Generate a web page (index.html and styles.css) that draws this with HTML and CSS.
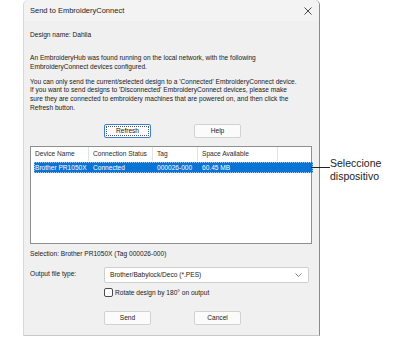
FILE: index.html
```html
<!DOCTYPE html>
<html lang="en">
  <head>
    <meta charset="UTF-8" />
    <title>Send to EmbroideryConnect</title>
    <link rel="stylesheet" href="styles.css">
  </head>
  <body>
    <div class="page">
      <div class="dialog">
        <div class="title-bar">
          <span class="title">Send to EmbroideryConnect</span>
          <svg class="close" width="8" height="8" viewBox="0 0 8 8">
            <path d="M0.5 0.5 L7.5 7.5 M7.5 0.5 L0.5 7.5" stroke="#333" stroke-width="0.9" fill="none" />
          </svg>
        </div>

        <div class="dialog-body">
          <div class="design-name">Design name: Dahlia</div>

          <p class="info">An EmbroideryHub was found running on the local network, with the following<br>EmbroideryConnect devices configured.</p>

          <p class="info">You can only send the current/selected design to a 'Connected' EmbroideryConnect device.<br>If you want to send designs to 'Disconnected' EmbroideryConnect devices, please make<br>sure they are connected to embroidery machines that are powered on, and then click the<br>Refresh button.</p>

          <div class="button-row top-buttons">
            <button class="btn default">Refresh</button>
            <button class="btn">Help</button>
          </div>

          <div class="device-list">
            <div class="list-row list-header">
              <div class="col col-name">Device Name</div>
              <div class="col col-status">Connection Status</div>
              <div class="col col-tag">Tag</div>
              <div class="col col-space">Space Available</div>
            </div>
            <div class="list-row selected">
              <div class="col col-name">Brother PR1050X</div>
              <div class="col col-status">Connected</div>
              <div class="col col-tag">000026-000</div>
              <div class="col col-space">60.45 MB</div>
            </div>
          </div>

          <div class="selection">Selection: Brother PR1050X (Tag 000026-000)</div>

          <div class="output-row">
            <label class="output-label">Output file type:</label>
            <div class="combo">
              <span>Brother/Babylock/Deco (*.PES)</span>
              <svg width="7" height="4" viewBox="0 0 7 4">
                <path d="M0.5 0.5 L3.5 3.5 L6.5 0.5" stroke="#666" stroke-width="0.8" fill="none" />
              </svg>
            </div>
          </div>

          <div class="check-row">
            <span class="checkbox"></span>
            <span>Rotate design by 180° on output</span>
          </div>

          <div class="button-row bottom-buttons">
            <button class="btn">Send</button>
            <button class="btn">Cancel</button>
          </div>
        </div>
      </div>

      <!-- callout pointing at the selected row -->
      <div class="callout">
        <div class="callout-line"></div>
        <div class="callout-text">Seleccione<br>dispositivo</div>
      </div>
    </div>
  </body>
</html>
```

FILE: styles.css
```css
/* Page */
body {
  margin: 0;
  background: #ffffff;
  font-family: "Liberation Sans", Arial, sans-serif;
}

.page {
  position: relative;
  width: 397px;
  height: 339px;
}

/* Dialog window */
.dialog {
  margin-left: 23px;
  width: 297px;
  height: 336px;
  background: #f0f0f0;
  border-right: 1px solid #8a8a8a;
  border-left: 1px solid #d8d8d8;
  border-bottom: 1px solid #c8c8c8;
  border-top-left-radius: 5px;
  border-top-right-radius: 5px;
  box-sizing: border-box;
  color: #1a1a1a;
  font-size: 6.6px;
}

.title-bar {
  height: 21px;
  display: flex;
  align-items: center;
  justify-content: space-between;
  padding: 0 6px 0 6px;
  background: #f3f3f3;
  border-top-left-radius: 5px;
  border-top-right-radius: 5px;
}

.title {
  font-size: 7.5px;
  color: #1c1c1c;
}

.close {
  margin-right: 1px;
}

.dialog-body {
  padding: 0 6px;
}

.design-name {
  margin-top: 9px;
  line-height: 9px;
}

.info {
  margin: 15px 0 0 0;
  line-height: 8.8px;
}

.info + .info {
  margin-top: 6px;
}

/* Buttons */
.button-row {
  display: flex;
  gap: 43px;
  padding-left: 74px;
}

.top-buttons {
  margin-top: 11px;
}

.bottom-buttons {
  margin-top: 14px;
}

.btn {
  width: 47px;
  height: 14px;
  padding: 0;
  background: #fbfbfb;
  border: 1px solid #d2d2d2;
  border-radius: 2px;
  font-family: "Liberation Sans", Arial, sans-serif;
  font-size: 6.6px;
  color: #1a1a1a;
}

.btn.default {
  border: 1px solid #3c7fd0;
  outline: 1px dotted #555;
  outline-offset: -3px;
}

/* Device list */
.device-list {
  margin-top: 8px;
  margin-right: 1px;
  height: 98px;
  background: #ffffff;
  border: 1px solid #8f8f8f;
  box-sizing: border-box;
}

.list-row {
  display: flex;
  height: 13px;
  align-items: center;
}

.list-header {
  height: 14px;
  color: #2a2a2a;
}

.list-header .col {
  border-right: 1px solid #e3e3e3;
  height: 14px;
  line-height: 14px;
}

.col {
  padding-left: 4px;
  box-sizing: border-box;
  white-space: nowrap;
  overflow: hidden;
}

.col-name {
  width: 58px;
}

.col-status {
  width: 64px;
}

.col-tag {
  width: 45px;
}

.col-space {
  width: 80px;
}

.list-row.selected {
  margin: 1px 0 0 3px;
  width: 279px;
  height: 11px;
  background: #0a74d6;
  color: #ffffff;
  outline: 1px dotted #9ec6ef;
  outline-offset: -1px;
}

.list-row.selected .col-name {
  width: 55px;
  padding-left: 1px;
}

/* Lower part */
.selection {
  margin-top: 5px;
  line-height: 9px;
}

.output-row {
  display: flex;
  align-items: center;
  margin-top: 9px;
}

.output-label {
  width: 74px;
  padding-bottom: 3px;
}

.combo {
  width: 205px;
  height: 16px;
  display: flex;
  align-items: center;
  justify-content: space-between;
  padding: 0 6px 0 5px;
  box-sizing: border-box;
  background: #ffffff;
  border: 1px solid #cfcfcf;
  border-radius: 2px;
}

.check-row {
  display: flex;
  align-items: center;
  gap: 2px;
  margin-top: 5px;
  padding-left: 74px;
}

.checkbox {
  width: 7px;
  height: 7px;
  border: 1px solid #4a4a4a;
  border-radius: 2px;
  background: #fdfdfd;
}

/* Callout */
.callout {
  position: absolute;
  left: 311px;
  top: 157px;
  display: flex;
  align-items: flex-start;
}

.callout-line {
  width: 19px;
  height: 1px;
  margin-top: 10px;
  background: #222222;
}

.callout-text {
  font-size: 10.5px;
  line-height: 13px;
  color: #222222;
}
```
